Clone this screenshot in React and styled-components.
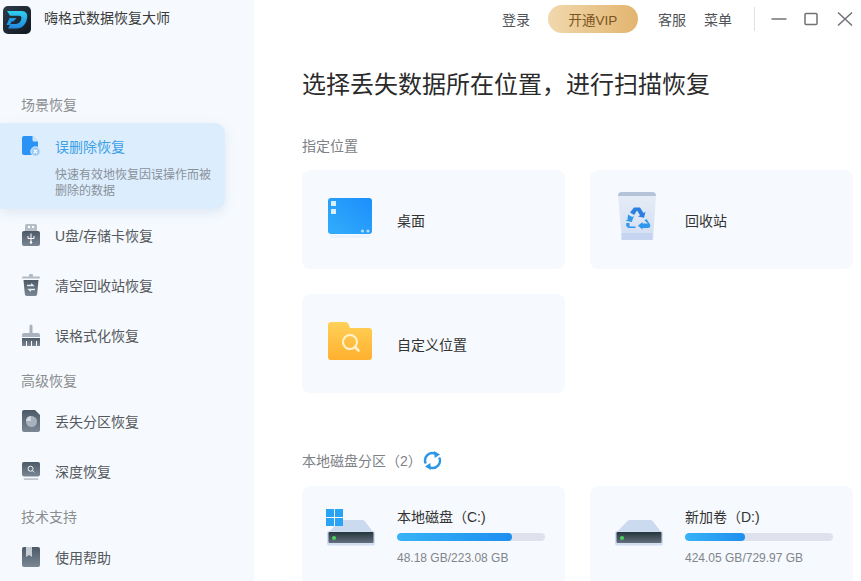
import React from 'react';
import styled, { createGlobalStyle } from 'styled-components';

const GlobalStyle = createGlobalStyle`
  html, body {
    margin: 0;
    padding: 0;
    height: 100%;
    overflow: hidden;
    background: #fff;
  }
  * {
    box-sizing: border-box;
  }
  body {
    font-family: "Liberation Sans", "Noto Sans CJK SC", sans-serif;
  }
`;

const Window = styled.div`
  display: flex;
  width: 861px;
  height: 581px;
  overflow: hidden;
`;

const Sidebar = styled.aside`
  flex: 0 0 254px;
  display: flex;
  flex-direction: column;
  background: #f6fafe;
  & > * {
    flex-shrink: 0;
  }
`;

const Brand = styled.div`
  display: flex;
  align-items: flex-start;
  gap: 13px;
  height: 40px;
  padding: 6px 0 0 3px;
  font-size: 14px;
  line-height: 24px;
  color: #3a3a3a;
  margin-bottom: 55px;
`;

const GroupTitle = styled.div`
  height: 20px;
  line-height: 20px;
  padding-left: 21px;
  font-size: 14px;
  color: #8b8d90;
  margin-top: ${p => p.$top || 0}px;
  margin-bottom: ${p => p.$bottom || 0}px;
`;

const ActiveCard = styled.div`
  width: 225px;
  height: 86px;
  padding: 12px 14px 0 22px;
  background: #dceefe;
  border-radius: 0 10px 10px 0;
  box-shadow: 0 4px 12px rgba(120, 150, 190, 0.18);
  margin-bottom: 2px;
  position: relative;
`;

const ActiveHead = styled.div`
  display: flex;
  align-items: center;
  gap: 15px;
  font-size: 14px;
  color: #3d9fe6;
`;

const ActiveDesc = styled.div`
  margin-top: 10px;
  padding-left: 33px;
  font-size: 12px;
  line-height: 16px;
  color: #8a9099;
`;

const NavItem = styled.div`
  display: flex;
  align-items: center;
  gap: 15px;
  height: 50px;
  padding: 0 0 2px 22px;
  font-size: 14px;
  color: #55585c;
`;

const IconSlot = styled.span`
  flex: 0 0 18px;
  width: 18px;
  display: flex;
  justify-content: center;
`;

const Main = styled.main`
  flex: 1;
  display: flex;
  flex-direction: column;
  min-width: 0;
  padding-left: 48px;
  & > * {
    flex-shrink: 0;
  }
`;

const TopBar = styled.header`
  display: flex;
  align-items: center;
  height: 38px;
  padding-left: 200px;
  font-size: 14px;
  color: #4f5257;
`;

const VipButton = styled.div`
  display: flex;
  align-items: center;
  justify-content: center;
  width: 90px;
  height: 28px;
  margin: 0 20px 0 18px;
  border-radius: 14px;
  background: linear-gradient(90deg, #f1d8ad, #e2b56f);
  color: #7a5524;
  font-size: 13.5px;
`;

const TopLink = styled.span`
  margin-right: ${p => p.$right}px;
`;

const Divider = styled.span`
  width: 1px;
  height: 24px;
  margin: 0 16px 0 22px;
  background: #dfe1e4;
`;

const WinButton = styled.svg`
  width: 16px;
  height: 16px;
  margin-right: ${p => p.$right || 0}px;
  fill: none;
  stroke: #6f7276;
  stroke-width: 1.5;
`;

const Heading = styled.h1`
  margin: 30px 0 0;
  height: 34px;
  line-height: 34px;
  font-size: 24px;
  font-weight: 400;
  color: #2b2b2b;
`;

const SectionTitle = styled.div`
  display: flex;
  align-items: center;
  gap: 1px;
  height: 20px;
  margin-top: ${p => p.$top}px;
  margin-bottom: ${p => p.$bottom}px;
  font-size: 14px;
  color: #7e8186;
`;

const CardGrid = styled.div`
  display: grid;
  grid-template-columns: 263px 263px;
  grid-auto-rows: 99px;
  gap: 25px;
`;

const Card = styled.div`
  display: flex;
  align-items: center;
  gap: 23px;
  padding-left: 24px;
  background: #f6f9fd;
  border-radius: 8px;
  font-size: 14px;
  color: #333;
`;

const DriveCard = styled(Card)`
  gap: 21px;
  align-items: flex-start;
  padding-top: 21px;
`;

const DriveGraphic = styled.svg`
  flex: 0 0 50px;
  margin-top: 2px;
`;

const BinGraphic = styled.svg`
  margin-top: -7px;
`;

const DriveInfo = styled.div`
  display: flex;
  flex-direction: column;
  width: 148px;
`;

const DriveName = styled.div`
  height: 20px;
  line-height: 20px;
  font-size: 14px;
  color: #333;
`;

const Track = styled.div`
  height: 8px;
  margin-top: 6px;
  border-radius: 4px;
  background: #dfe2ed;
  overflow: hidden;
`;

const Fill = styled.div`
  height: 100%;
  border-radius: 4px;
  background: linear-gradient(90deg, #37b3f6, #1e8ff0);
`;

const DriveSize = styled.div`
  margin-top: 9px;
  font-size: 12px;
  line-height: 16px;
  color: #81858b;
`;

const Logo = () => (
  <svg width="28" height="28" viewBox="0 0 28 28">
    <defs>
      <linearGradient id="logoBg" x1="0" y1="0" x2="1" y2="1">
        <stop offset="0" stopColor="#2c3c4c" />
        <stop offset="1" stopColor="#10181f" />
      </linearGradient>
      <linearGradient id="logoD" x1="0" y1="0" x2="0" y2="1">
        <stop offset="0" stopColor="#2fd0f0" />
        <stop offset="1" stopColor="#2187e0" />
      </linearGradient>
    </defs>
    <rect width="28" height="28" rx="5" fill="url(#logoBg)" />
    <path d="M4 5h14.500c4.500 0 6.500 3 5.500 7.500-1 5.500-4.500 10-10 10H5l2.500-4.500h5.500c2.700 0 4.700-2.200 5.300-5 .4-2-.4-3.200-2.300-3.200H7z" fill="url(#logoD)" />
    <path d="M6.500 12h7l-2.800 3.200H8.800l-2 3.800H3.500z" fill="#1f9ce8" />
  </svg>
);

const NavGradient = ({ id }) => (
  <defs>
    <linearGradient id={id} x1="0" y1="0" x2="0" y2="1">
      <stop offset="0" stopColor="#4c5966" />
      <stop offset="1" stopColor="#7b8794" />
    </linearGradient>
  </defs>
);

const DeleteIcon = () => (
  <svg width="18" height="22" viewBox="0 0 18 22">
    <path d="M2 1h8.500L16 6.500V18a2 2 0 0 1-2 2H2a2 2 0 0 1-2-2V3a2 2 0 0 1 2-2z" fill="#2a93f5" />
    <path d="M10.500 1L16 6.500h-4A1.500 1.500 0 0 1 10.500 5z" fill="#cfe6fc" />
    <circle cx="13.500" cy="16.500" r="4.700" fill="#9ccbf2" stroke="#dceefe" strokeWidth="1" />
    <path d="M11.700 14.700l3.600 3.600m0-3.600l-3.600 3.600" stroke="#fff" strokeWidth="1.100" />
  </svg>
);

const UsbIcon = () => (
  <svg width="18" height="22" viewBox="0 0 18 22">
    <NavGradient id="usbFill" />
    <path d="M3 1.500A1.500 1.500 0 0 1 4.500 0h9A1.500 1.500 0 0 1 15 1.500V7H3z" fill="#b6bec7" />
    <rect x="6" y="2" width="2" height="2" fill="#fff" />
    <rect x="10" y="2" width="2" height="2" fill="#fff" />
    <rect y="7" width="18" height="15" rx="2" fill="url(#usbFill)" />
    <path d="M9 9.500v9M6 12v2.500h6V12" stroke="#fff" strokeWidth="1" fill="none" />
    <circle cx="9" cy="18.500" r="1.200" fill="#fff" />
  </svg>
);

const TrashIcon = () => (
  <svg width="18" height="22" viewBox="0 0 18 22">
    <NavGradient id="trashFill" />
    <rect x="0" y="2.500" width="18" height="2" rx="1" fill="#b2bac3" />
    <rect x="7" y="0" width="4" height="3" rx="1" fill="#b2bac3" />
    <path d="M1.500 6h15l-1.300 14a2 2 0 0 1-2 2H4.800a2 2 0 0 1-2-2z" fill="url(#trashFill)" />
    <path d="M5 11.500h6l-1.800-1.800M13 15.500H7l1.800 1.800" stroke="#e6e9ec" strokeWidth="1.400" fill="none" />
  </svg>
);

const BroomIcon = () => (
  <svg width="18" height="22" viewBox="0 0 18 22">
    <NavGradient id="broomFill" />
    <path d="M7.500 2a1.500 1.500 0 0 1 3 0v7h-3z" fill="#aab3bd" />
    <path d="M0 11a2 2 0 0 1 2-2h14a2 2 0 0 1 2 2v2H0z" fill="#aab3bd" />
    <path d="M0 14h18v8h-3v-5h-1v5h-4v-5H9v5H5v-5H4v5H0z" fill="url(#broomFill)" />
  </svg>
);

const PartitionIcon = () => (
  <svg width="18" height="22" viewBox="0 0 18 22">
    <NavGradient id="partFill" />
    <path d="M2 0h11l5 5v15a2 2 0 0 1-2 2H2a2 2 0 0 1-2-2V2a2 2 0 0 1 2-2z" fill="url(#partFill)" />
    <circle cx="9.500" cy="11.500" r="5.500" fill="#a8b2bc" />
    <path d="M8.800 11V6A5.500 5.500 0 0 0 4 11z" fill="#d3d9df" />
  </svg>
);

const DeepIcon = () => (
  <svg width="20" height="20" viewBox="0 0 20 20">
    <NavGradient id="deepFill" />
    <rect x="0" y="0" width="20" height="16" rx="2" fill="url(#deepFill)" />
    <rect x="2" y="18" width="16" height="2" fill="#c0c7cf" />
    <circle cx="9.500" cy="7.500" r="2.800" stroke="#fff" strokeWidth="1" fill="none" />
    <path d="M11.500 9.500l2 2" stroke="#fff" strokeWidth="1" />
  </svg>
);

const BookIcon = () => (
  <svg width="18" height="20" viewBox="0 0 18 20">
    <NavGradient id="bookFill" />
    <rect width="18" height="20" rx="2" fill="url(#bookFill)" />
    <path d="M4 0h6v10L7 8l-3 2z" fill="#c6ccd3" />
  </svg>
);

const DesktopIcon = () => (
  <svg width="48" height="48" viewBox="0 0 48 48">
    <defs>
      <linearGradient id="deskFill" x1="0" y1="1" x2="1" y2="0">
        <stop offset="0" stopColor="#32adfb" />
        <stop offset="1" stopColor="#1c8ffb" />
      </linearGradient>
    </defs>
    <rect x="4" y="39" width="40" height="3" fill="#eaf3fd" />
    <rect x="2" y="2" width="44" height="36" rx="3" fill="url(#deskFill)" />
    <rect x="5" y="5" width="5" height="5" rx="0.5" fill="#dcefff" />
    <rect x="5" y="13" width="5" height="5" rx="0.5" fill="#dcefff" />
    <circle cx="36.500" cy="35" r="1.600" fill="#b5dcfd" />
    <circle cx="42" cy="35" r="1.600" fill="#b5dcfd" />
  </svg>
);

const RecycleIcon = () => (
  <BinGraphic width="48" height="48" viewBox="-3 0 48 48">
    <defs>
      <linearGradient id="binFill" x1="0" y1="0" x2="0" y2="1">
        <stop offset="0" stopColor="#e6edf7" />
        <stop offset="1" stopColor="#d3def2" />
      </linearGradient>
    </defs>
    <path d="M1 3a3 3 0 0 1 3-3h32a3 3 0 0 1 3 3l-3 45H5z" fill="url(#binFill)" />
    <path d="M1 4a4 4 0 0 1 4-4h30a4 4 0 0 1 4 4z" fill="#b5c3d9" />
    <rect x="4.500" y="41" width="31" height="7" fill="#c6d4ef" />
    <path d="M17 15.500h6l3.500 5.500 2-1.200-1.500 6-6-1.300 2-1.200-3-4.800-2.800 4.500-4.200-2.400z" fill="#2a7fe0" />
    <path d="M11 22.500l4.200 2.400 1.800-1-2.300 6.200-6-1.300 1.800-1zM9.500 31l3 0 0 3.500h6V36h-6c-2.500 0-4-2.500-3-5z" fill="#2f97ee" />
    <path d="M29.500 27l3.500 5.500c1 2-.5 3.500-2.500 3.500h-5v1.500l-4.500-3.700 4.500-3.700v1.500h5.500l-3.500-3.200z" fill="#2f97ee" />
  </BinGraphic>
);

const FolderIcon = () => (
  <svg width="48" height="48" viewBox="0 0 48 48">
    <defs>
      <linearGradient id="folderFill" x1="0" y1="0" x2="0" y2="1">
        <stop offset="0" stopColor="#ffd158" />
        <stop offset="1" stopColor="#ffb02e" />
      </linearGradient>
    </defs>
    <path d="M2 5a3 3 0 0 1 3-3h14c2 0 3 1 4 3l1 3h19a3 3 0 0 1 3 3v26a3 3 0 0 1-3 3H5a3 3 0 0 1-3-3z" fill="url(#folderFill)" />
    <circle cx="24" cy="22" r="7" stroke="#fff3cf" strokeWidth="2" fill="none" />
    <path d="M29 27l3.500 3.500" stroke="#fff3cf" strokeWidth="2.500" strokeLinecap="round" />
  </svg>
);

const RefreshIcon = () => (
  <svg width="19" height="19" viewBox="0 0 19 19" fill="none">
    <path d="M2.800 12.500A7.200 7.200 0 0 1 12 2.700M16.200 6.500A7.200 7.200 0 0 1 7 16.300" stroke="#2c96e6" strokeWidth="2.400" />
    <path d="M11 0l6 3.400-5.300 3.600zM8 19l-6-3.400 5.300-3.600z" fill="#2c96e6" />
  </svg>
);

const DriveIcon = ({ windows }) => (
  <DriveGraphic width="50" height="37" viewBox="0 0 50 37">
    <defs>
      <linearGradient id="driveFace" x1="0" y1="0" x2="0" y2="1">
        <stop offset="0" stopColor="#27353f" />
        <stop offset="1" stopColor="#63707b" />
      </linearGradient>
    </defs>
    <path d="M13 12.500a3 3 0 0 1 2.500-1.500h21a3 3 0 0 1 2.500 1.500l9 11.500H2z" fill="#ccdaf0" />
    <rect x="1" y="22" width="48" height="14.500" rx="2" fill="#d1ddf1" />
    <rect x="2.500" y="23" width="45" height="11" rx="1" fill="url(#driveFace)" />
    <circle cx="8" cy="29" r="2" fill="#46d25c" />
    {windows && (
      <g fill="#29a3f4">
        <rect x="0" y="0" width="8" height="8" />
        <rect x="9" y="0" width="8" height="8" />
        <rect x="0" y="9" width="8" height="8" />
        <rect x="9" y="9" width="8" height="8" />
      </g>
    )}
  </DriveGraphic>
);

const topItems = [
  { label: 'U盘/存储卡恢复', icon: <UsbIcon /> },
  { label: '清空回收站恢复', icon: <TrashIcon /> },
  { label: '误格式化恢复', icon: <BroomIcon /> },
];

const drives = [
  { name: '本地磁盘（C:)', size: '48.18 GB/223.08 GB', used: 77.5, windows: true },
  { name: '新加卷（D:)', size: '424.05 GB/729.97 GB', used: 40.5, windows: false },
];

export default function App() {
  return (
    <Window>
      <GlobalStyle />
      <Sidebar>
        <Brand>
          <Logo />
          <span>嗨格式数据恢复大师</span>
        </Brand>
        <GroupTitle $bottom={8}>场景恢复</GroupTitle>
        <ActiveCard>
          <ActiveHead>
            <DeleteIcon />
            <span>误删除恢复</span>
          </ActiveHead>
          <ActiveDesc>快速有效地恢复因误操作而被删除的数据</ActiveDesc>
        </ActiveCard>
        {topItems.map(item => (
          <NavItem key={item.label}>
            <IconSlot>{item.icon}</IconSlot>
            <span>{item.label}</span>
          </NavItem>
        ))}
        <GroupTitle $top={10} $bottom={6}>高级恢复</GroupTitle>
        <NavItem>
          <IconSlot><PartitionIcon /></IconSlot>
          <span>丢失分区恢复</span>
        </NavItem>
        <NavItem>
          <IconSlot><DeepIcon /></IconSlot>
          <span>深度恢复</span>
        </NavItem>
        <GroupTitle $top={10} $bottom={6}>技术支持</GroupTitle>
        <NavItem>
          <IconSlot><BookIcon /></IconSlot>
          <span>使用帮助</span>
        </NavItem>
      </Sidebar>
      <Main>
        <TopBar>
          <span>登录</span>
          <VipButton>开通VIP</VipButton>
          <TopLink $right={18}>客服</TopLink>
          <span>菜单</span>
          <Divider />
          <WinButton viewBox="0 0 16 16" $right={16}>
            <path d="M0.5 8h15" />
          </WinButton>
          <WinButton viewBox="0 0 16 16" $right={18}>
            <rect x="2" y="2.5" width="12" height="11" rx="1" />
          </WinButton>
          <WinButton viewBox="0 0 16 16">
            <path d="M1 1.5l14 13m0-13l-14 13" />
          </WinButton>
        </TopBar>
        <Heading>选择丢失数据所在位置，进行扫描恢复</Heading>
        <SectionTitle $top={33} $bottom={15}>指定位置</SectionTitle>
        <CardGrid>
          <Card>
            <DesktopIcon />
            <span>桌面</span>
          </Card>
          <Card>
            <RecycleIcon />
            <span>回收站</span>
          </Card>
          <Card>
            <FolderIcon />
            <span>自定义位置</span>
          </Card>
        </CardGrid>
        <SectionTitle $top={57} $bottom={16}>
          <span>本地磁盘分区（2）</span>
          <RefreshIcon />
        </SectionTitle>
        <CardGrid>
          {drives.map(drive => (
            <DriveCard key={drive.name}>
              <DriveIcon windows={drive.windows} />
              <DriveInfo>
                <DriveName>{drive.name}</DriveName>
                <Track>
                  <Fill style={{ width: `${drive.used}%` }} />
                </Track>
                <DriveSize>{drive.size}</DriveSize>
              </DriveInfo>
            </DriveCard>
          ))}
        </CardGrid>
      </Main>
    </Window>
  );
}
